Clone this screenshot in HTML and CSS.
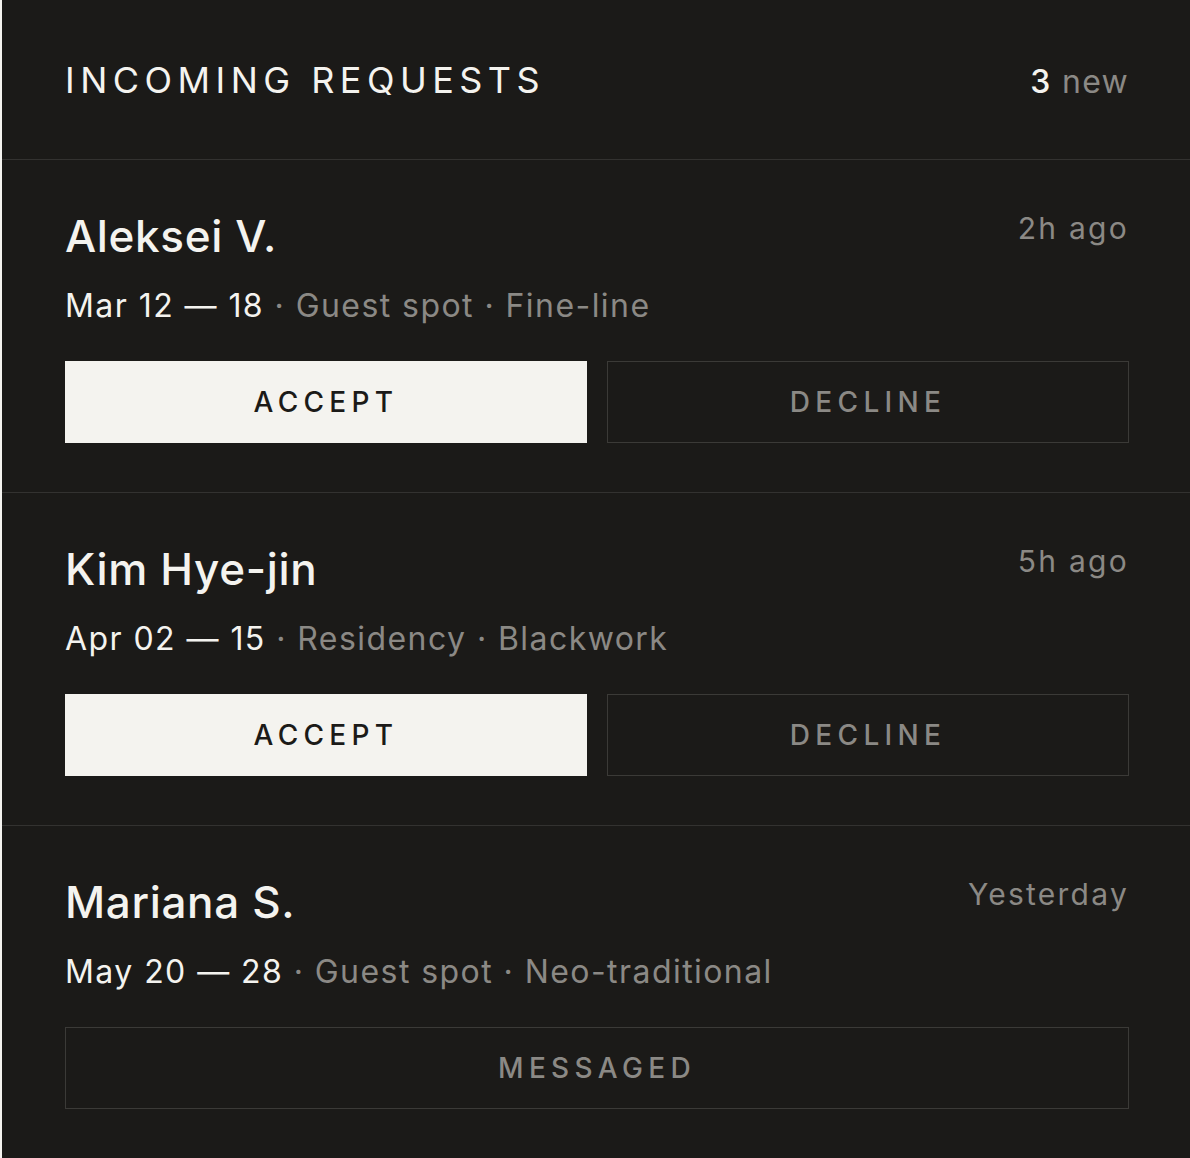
FILE: index.html
```html
<!DOCTYPE html>
<html lang="en">
<head>
  <meta charset="UTF-8">
  <title>Incoming requests</title>
  <meta name="viewport" content="width=device-width, initial-scale=1">
  <link rel="stylesheet" href="styles.css">
</head>
<body>

<section class="panel">
  <header class="panel-head">
    <h2>Incoming requests</h2>
    <div class="count"><strong>3</strong> new</div>
  </header>

  <div class="request">
    <div class="request-top">
      <div class="name">Aleksei V.</div>
      <div class="when">2h ago</div>
    </div>
    <div class="meta"><span class="dates">Mar 12 — 18</span> · Guest spot · Fine-line</div>
    <div class="actions">
      <button class="btn btn-accept">Accept</button>
      <button class="btn btn-ghost">Decline</button>
    </div>
  </div>

  <div class="request">
    <div class="request-top">
      <div class="name">Kim Hye-jin</div>
      <div class="when">5h ago</div>
    </div>
    <div class="meta"><span class="dates">Apr 02 — 15</span> · Residency · Blackwork</div>
    <div class="actions">
      <button class="btn btn-accept">Accept</button>
      <button class="btn btn-ghost">Decline</button>
    </div>
  </div>

  <div class="request">
    <div class="request-top">
      <div class="name">Mariana S.</div>
      <div class="when">Yesterday</div>
    </div>
    <div class="meta"><span class="dates">May 20 — 28</span> · Guest spot · Neo-traditional</div>
    <div class="actions single">
      <button class="btn btn-ghost">Messaged</button>
    </div>
  </div>
</section>

</body>
</html>
```

FILE: styles.css
```css
:root {
  --page-bg: #f4f3ef;
  --panel-bg: #1b1a18;
  --text: #f4f3ef;
  --muted: #8b8985;
  --line: #333230;
  --btn-border: #3b3a37;
}

* {
  box-sizing: border-box;
}

body {
  margin: 0;
  background-color: var(--page-bg);
  font-family: Inter, "Noto Sans", sans-serif;
  color: var(--text);
}

.panel {
  margin-left: 2px;
  min-height: 1158px;
  background-color: var(--panel-bg);
}

.panel-head {
  display: flex;
  justify-content: space-between;
  align-items: baseline;
  padding: 56px 61px 55px 63px;
  border-bottom: 1px solid var(--line);
}

.panel-head h2 {
  margin: 0;
  font-size: 36px;
  line-height: 48px;
  font-weight: 400;
  letter-spacing: 0.152em;
  text-transform: uppercase;
}

.count {
  font-size: 32px;
  color: var(--muted);
  letter-spacing: 0.04em;
}

.count strong {
  font-weight: 500;
  color: var(--text);
}

.request {
  padding: 48px 61px 49px 63px;
  border-bottom: 1px solid var(--line);
}

.request:last-child {
  border-bottom: none;
}

.request-top {
  display: flex;
  justify-content: space-between;
  align-items: flex-start;
}

.name {
  font-size: 44px;
  line-height: 56px;
  font-weight: 500;
  letter-spacing: 0.015em;
}

.when {
  font-size: 30px;
  line-height: 40px;
  color: var(--muted);
  letter-spacing: 0.075em;
}

.meta {
  margin-top: 20px;
  font-size: 32px;
  line-height: 44px;
  color: var(--muted);
  letter-spacing: 0.045em;
}

.meta .dates {
  color: var(--text);
}

.actions {
  display: grid;
  grid-template-columns: 1fr 1fr;
  gap: 20px;
  margin-top: 33px;
}

.actions.single {
  grid-template-columns: 1fr;
}

.btn {
  height: 82px;
  font-family: inherit;
  font-size: 28px;
  font-weight: 500;
  letter-spacing: 0.19em;
  text-transform: uppercase;
  border: 1px solid var(--btn-border);
  cursor: pointer;
}

.btn-accept {
  background-color: var(--text);
  border-color: var(--text);
  color: #1b1a18;
}

.btn-ghost {
  background-color: transparent;
  color: var(--muted);
}
```
